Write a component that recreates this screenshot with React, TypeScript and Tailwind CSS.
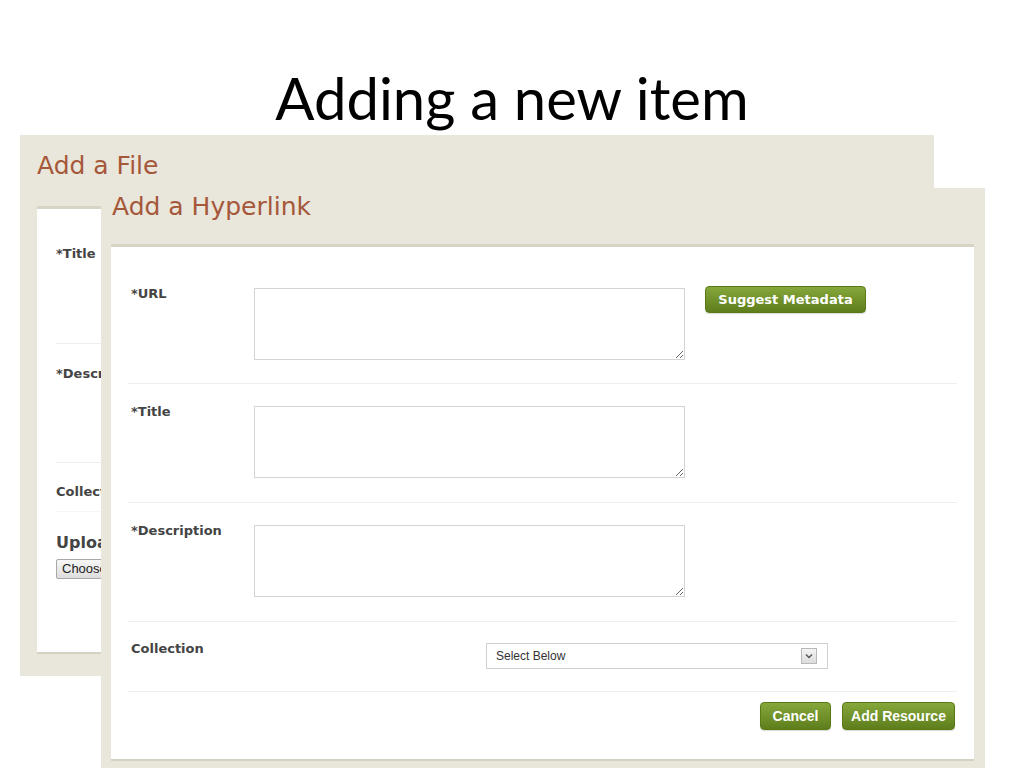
import React from 'react'

const label = "font-['DejaVu_Sans',sans-serif] font-bold text-[13px] text-[#444]"
const greenBtn =
  "rounded-[4px] border border-[#5a7a18] bg-gradient-to-b from-[#86a73a] to-[#5d7e1b] text-white font-bold shadow-[0_1px_1px_rgba(0,0,0,0.15)]"

function Area() {
  return (
    <textarea className="w-[431px] h-[72px] border border-[#d4d4d4] bg-white block" />
  )
}

function SelectBox() {
  return (
    <div className="w-[342px] h-[26px] border border-[#d0d0d0] bg-white flex items-center justify-between pl-[9px] pr-[10px]">
      <span className="font-['Liberation_Sans',sans-serif] text-[12px] text-[#333]">Select Below</span>
      <span className="w-[16px] h-[16px] border border-[#b8b8b8] bg-gradient-to-b from-[#f4f4f4] to-[#dcdcdc] flex items-center justify-center">
        <svg width="8" height="6" viewBox="0 0 8 6">
          <path d="M1 1.5 L4 4.5 L7 1.5" fill="none" stroke="#555" strokeWidth="1.4" />
        </svg>
      </span>
    </div>
  )
}

function FilePanel() {
  return (
    <div className="absolute left-[20px] top-[135px] w-[914px] h-[541px] bg-[#e9e6db] flex flex-col">
      <div className="h-[71px] pl-[17px] pt-[17px]">
        <h2 className="font-['DejaVu_Sans',sans-serif] text-[25px] leading-[28px] text-[#a5573a]">Add a File</h2>
      </div>
      <div className="ml-[17px] mr-[17px] h-[446px] bg-white border-t-[3px] border-[#d7d3c5] shadow-[0_2px_0_#d5d1c3] px-[19px]">
        <div className="h-[135px] pt-[35px] border-b border-[#f0eee8]">
          <div className={label}>*Title</div>
        </div>
        <div className="h-[119px] pt-[20px] border-b border-[#f0eee8]">
          <div className={label}>*Description</div>
        </div>
        <div className="h-[49px] pt-[19px] border-b border-[#f8f7f3]">
          <div className={label}>Collection</div>
        </div>
        <div className="pt-[19px]">
          <div className="font-['DejaVu_Sans',sans-serif] font-bold text-[16px] text-[#444]">Upload</div>
          <button className="mt-[3px] h-[20px] px-[5px] border border-[#a8a8a8] rounded-[2px] bg-gradient-to-b from-[#f6f6f6] to-[#dedede] font-['Liberation_Sans',sans-serif] text-[13px] leading-[18px] text-[#222]">
            Choose File
          </button>
        </div>
      </div>
    </div>
  )
}

function HyperlinkPanel() {
  return (
    <div className="absolute left-[101px] top-[188px] w-[884px] h-[600px] bg-[#e9e6db] flex flex-col">
      <div className="h-[56px] pl-[11px] pt-[5px]">
        <h2 className="font-['DejaVu_Sans',sans-serif] text-[25px] leading-[28px] text-[#a5573a]">Add a Hyperlink</h2>
      </div>
      <div className="ml-[10px] w-[863px] h-[515px] bg-white border-t-[3px] border-[#d7d3c5] shadow-[0_2px_0_#d5d1c3] px-[17px] pt-[18px]">
        <div className="flex pt-[23px] pb-[23px] pl-[3px] border-b border-[#f0eee8]">
          <div className={`${label} w-[123px] -mt-[4px]`}>*URL</div>
          <Area />
          <button className={`${greenBtn} ml-[20px] -mt-[2px] h-[27px] w-[161px] font-['DejaVu_Sans',sans-serif] text-[13px]`}>
            Suggest Metadata
          </button>
        </div>
        <div className="flex pt-[22px] pb-[24px] pl-[3px] border-b border-[#f0eee8]">
          <div className={`${label} w-[123px] -mt-[4px]`}>*Title</div>
          <Area />
        </div>
        <div className="flex pt-[22px] pb-[24px] pl-[3px] border-b border-[#f0eee8]">
          <div className={`${label} w-[123px] -mt-[4px]`}>*Description</div>
          <Area />
        </div>
        <div className="flex pt-[21px] pb-[22px] pl-[3px] border-b border-[#f0eee8]">
          <div className={`${label} w-[355px] -mt-[4px]`}>Collection</div>
          <SelectBox />
        </div>
        <div className="flex justify-end gap-[11px] pt-[10px] pr-[2px]">
          <button className={`${greenBtn} h-[28px] w-[71px] font-['Liberation_Sans',sans-serif] text-[14px]`}>Cancel</button>
          <button className={`${greenBtn} h-[28px] w-[113px] font-['Liberation_Sans',sans-serif] text-[14px]`}>Add Resource</button>
        </div>
      </div>
    </div>
  )
}

export default function App() {
  return (
    <div className="relative w-[1024px] h-[768px] overflow-hidden bg-white">
      <h1 className="pt-[63px] text-center font-['Lato',sans-serif] text-[58px] leading-[70px] text-black">
        Adding a new item
      </h1>
      <FilePanel />
      <HyperlinkPanel />
    </div>
  )
}
